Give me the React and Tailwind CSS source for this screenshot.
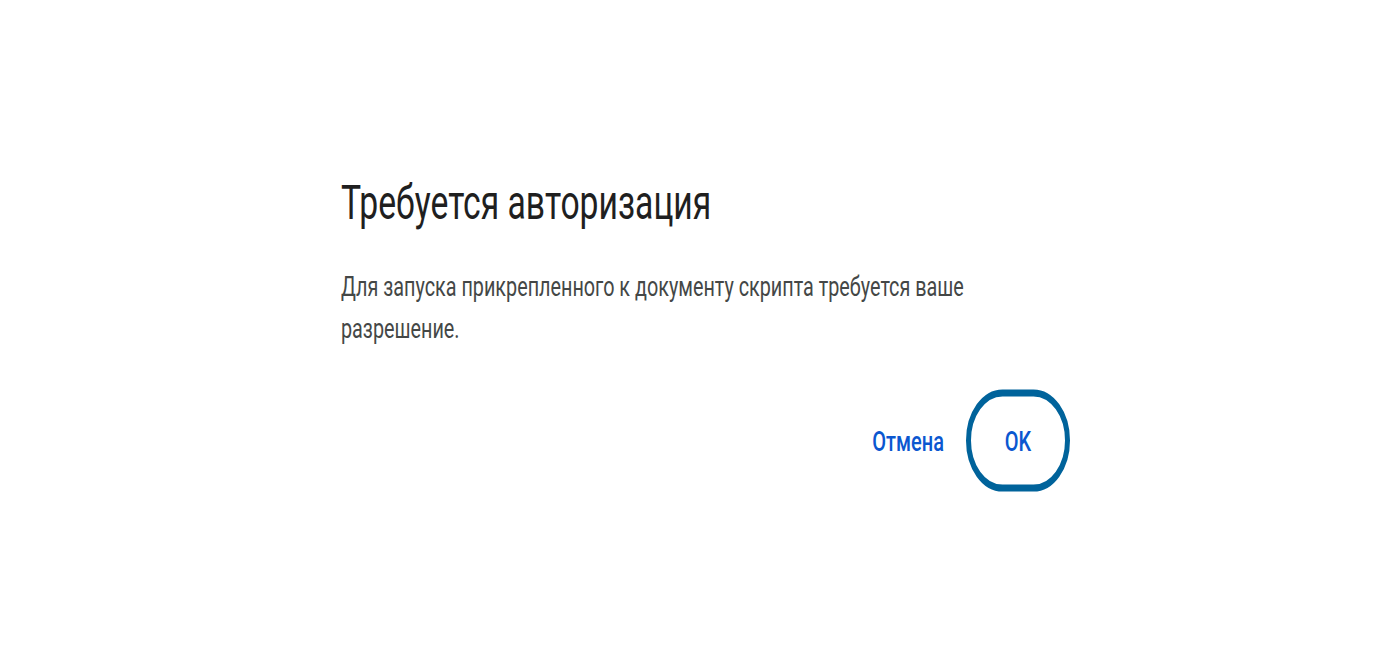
import React from 'react';

const App = () => {
  return (
    <div className="w-[1400px] h-[660px] bg-white overflow-hidden font-['Roboto',sans-serif]">
      <div className="pt-[150px] pl-[341px]">
        {/* dialog, stretched vertically like the reference capture */}
        <div className="w-[729px] origin-top-left scale-y-[1.4] pt-[18px]">
          <h2 className="text-[33.7px] leading-[40px] font-normal text-[#1f1f1f]">
            Требуется авторизация
          </h2>
          <p className="mt-[25px] text-[19.8px] leading-[30px] text-[#444746]">
            Для запуска прикрепленного к документу скрипта требуется ваше разрешение.
          </p>
          <div className="mt-[28px] flex items-center justify-end gap-[22px]">
            <button className="text-[20px] font-medium text-[#0b57d0]">Отмена</button>
            <button className="w-[104px] h-[73px] rounded-full border-[5px] border-[#00639b] text-[20px] font-medium text-[#0b57d0] flex items-center justify-center">
              OK
            </button>
          </div>
        </div>
      </div>
    </div>
  );
};

export default App;
